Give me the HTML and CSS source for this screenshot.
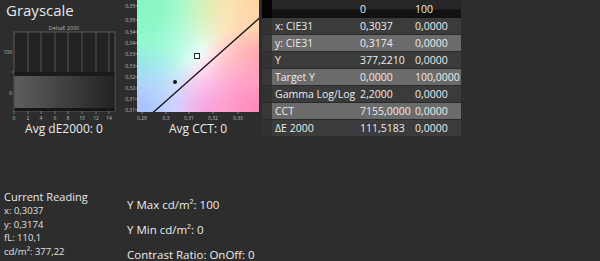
FILE: index.html
```html
<!DOCTYPE html>
<html>
<head>
<meta charset="utf-8">
<link rel="stylesheet" href="styles.css">
</head>
<body>
<div class="page">
  <div class="top">
    <div class="panel panel-gray">
      <div class="title">Grayscale</div>
      <svg class="chart-gray" width="120" height="102" viewBox="0 0 120 102">
        <defs>
          <linearGradient id="band" x1="0" y1="0" x2="1" y2="0">
            <stop offset="0" stop-color="#5e5e5e"/>
            <stop offset="1" stop-color="#232323"/>
          </linearGradient>
        </defs>
        <text x="64" y="10" class="t-tiny" text-anchor="middle">DeltaE 2000</text>
        <rect x="14" y="12" width="101" height="79" fill="#222222" stroke="#5a5a5a" stroke-width="1"/>
        <g stroke="#555555" stroke-width="1">
          <line x1="28" y1="12" x2="28" y2="91"/>
          <line x1="41" y1="12" x2="41" y2="91"/>
          <line x1="55" y1="12" x2="55" y2="91"/>
          <line x1="68" y1="12" x2="68" y2="91"/>
          <line x1="82" y1="12" x2="82" y2="91"/>
          <line x1="96" y1="12" x2="96" y2="91"/>
          <line x1="109" y1="12" x2="109" y2="91"/>
        </g>
        <rect x="14.5" y="52" width="100" height="4" fill="#1a1a1a"/>
        <rect x="14.5" y="56" width="100" height="32" fill="url(#band)"/>
        <rect x="14.5" y="88" width="100" height="3" fill="#161616"/>
        <g stroke="#777" stroke-width="1">
          <line x1="12" y1="52" x2="14" y2="52"/>
          <line x1="14" y1="91" x2="14" y2="94"/>
          <line x1="28" y1="91" x2="28" y2="94"/>
          <line x1="41" y1="91" x2="41" y2="94"/>
          <line x1="55" y1="91" x2="55" y2="94"/>
          <line x1="68" y1="91" x2="68" y2="94"/>
          <line x1="82" y1="91" x2="82" y2="94"/>
          <line x1="96" y1="91" x2="96" y2="94"/>
          <line x1="109" y1="91" x2="109" y2="94"/>
        </g>
        <text x="12" y="34" class="t-axis" text-anchor="end">100</text>
        <text x="12" y="75" class="t-axis" text-anchor="end">0</text>
        <g class="t-axis" text-anchor="middle">
          <text x="14" y="100">0</text>
          <text x="28" y="100">2</text>
          <text x="41" y="100">4</text>
          <text x="55" y="100">6</text>
          <text x="68" y="100">8</text>
          <text x="82" y="100">10</text>
          <text x="96" y="100">12</text>
          <text x="109" y="100">14</text>
        </g>
      </svg>
      <div class="caption caption-gray">Avg dE2000: 0</div>
    </div>

    <div class="panel panel-cie">
      <svg class="chart-cie" width="142" height="122" viewBox="0 0 142 122">
        <defs>
          <clipPath id="plotclip"><rect x="17" y="0" width="122" height="112"/></clipPath>
          <radialGradient id="gTL" gradientUnits="userSpaceOnUse" cx="17" cy="0" r="95">
            <stop offset="0" stop-color="#84f6c2" stop-opacity="1"/>
            <stop offset="0.3" stop-color="#84f6c2" stop-opacity="0.9"/>
            <stop offset="1" stop-color="#84f6c2" stop-opacity="0"/>
          </radialGradient>
          <radialGradient id="gTR" gradientUnits="userSpaceOnUse" cx="139" cy="0" r="75">
            <stop offset="0" stop-color="#ffd29a" stop-opacity="1"/>
            <stop offset="1" stop-color="#ffd29a" stop-opacity="0"/>
          </radialGradient>
          <radialGradient id="gTM" gradientUnits="userSpaceOnUse" cx="88" cy="0" r="50">
            <stop offset="0" stop-color="#f2fdb8" stop-opacity="1"/>
            <stop offset="1" stop-color="#f2fdb8" stop-opacity="0"/>
          </radialGradient>
          <radialGradient id="gBR" gradientUnits="userSpaceOnUse" cx="139" cy="112" r="85">
            <stop offset="0" stop-color="#ff88b9" stop-opacity="1"/>
            <stop offset="0.25" stop-color="#ff88b9" stop-opacity="0.85"/>
            <stop offset="1" stop-color="#ff88b9" stop-opacity="0"/>
          </radialGradient>
          <radialGradient id="gRM" gradientUnits="userSpaceOnUse" cx="139" cy="52" r="55">
            <stop offset="0" stop-color="#ffaea4" stop-opacity="0.9"/>
            <stop offset="1" stop-color="#ffaea4" stop-opacity="0"/>
          </radialGradient>
          <radialGradient id="gBL" gradientUnits="userSpaceOnUse" cx="17" cy="112" r="70">
            <stop offset="0" stop-color="#a8c0ff" stop-opacity="1"/>
            <stop offset="0.2" stop-color="#a8c0ff" stop-opacity="0.9"/>
            <stop offset="1" stop-color="#a8c0ff" stop-opacity="0"/>
          </radialGradient>
          <radialGradient id="gLM" gradientUnits="userSpaceOnUse" cx="17" cy="60" r="65">
            <stop offset="0" stop-color="#98fcee" stop-opacity="1"/>
            <stop offset="1" stop-color="#98fcee" stop-opacity="0"/>
          </radialGradient>
          <radialGradient id="gBM" gradientUnits="userSpaceOnUse" cx="88" cy="112" r="55">
            <stop offset="0" stop-color="#f2b8ff" stop-opacity="1"/>
            <stop offset="1" stop-color="#f2b8ff" stop-opacity="0"/>
          </radialGradient>
        </defs>
        <g clip-path="url(#plotclip)">
          <rect x="17" y="0" width="122" height="112" fill="#ffffff"/>
          <rect x="17" y="0" width="122" height="112" fill="url(#gLM)"/>
          <rect x="17" y="0" width="122" height="112" fill="url(#gBM)"/>
          <rect x="17" y="0" width="122" height="112" fill="url(#gRM)"/>
          <rect x="17" y="0" width="122" height="112" fill="url(#gTM)"/>
          <rect x="17" y="0" width="122" height="112" fill="url(#gTL)"/>
          <rect x="17" y="0" width="122" height="112" fill="url(#gTR)"/>
          <rect x="17" y="0" width="122" height="112" fill="url(#gBL)"/>
          <rect x="17" y="0" width="122" height="112" fill="url(#gBR)"/>
          <line x1="32.5" y1="113" x2="140" y2="17.5" stroke="#111" stroke-width="1.3"/>
          <rect x="74.5" y="53.5" width="5" height="5" fill="#ffffff" stroke="#222" stroke-width="1"/>
          <circle cx="55" cy="82" r="2" fill="#111"/>
        </g>
        <g stroke="#888" stroke-width="1">
          <line x1="15" y1="6" x2="17" y2="6"/>
          <line x1="15" y1="20" x2="17" y2="20"/>
          <line x1="15" y1="32" x2="17" y2="32"/>
          <line x1="15" y1="43" x2="17" y2="43"/>
          <line x1="15" y1="54" x2="17" y2="54"/>
          <line x1="15" y1="66" x2="17" y2="66"/>
          <line x1="15" y1="77" x2="17" y2="77"/>
          <line x1="15" y1="88" x2="17" y2="88"/>
          <line x1="15" y1="99" x2="17" y2="99"/>
          <line x1="15" y1="110" x2="17" y2="110"/>
          <line x1="22" y1="112" x2="22" y2="114"/>
          <line x1="46" y1="112" x2="46" y2="114"/>
          <line x1="69" y1="112" x2="69" y2="114"/>
          <line x1="93" y1="112" x2="93" y2="114"/>
          <line x1="118" y1="112" x2="118" y2="114"/>
        </g>
        <g class="t-axis" text-anchor="end">
          <text x="15" y="8">0,35</text>
          <text x="15" y="22">0,35</text>
          <text x="15" y="34">0,34</text>
          <text x="15" y="45">0,34</text>
          <text x="15" y="56">0,33</text>
          <text x="15" y="68">0,33</text>
          <text x="15" y="79">0,32</text>
          <text x="15" y="90">0,32</text>
          <text x="15" y="101">0,31</text>
          <text x="15" y="112">0,31</text>
        </g>
        <g class="t-axis" text-anchor="middle">
          <text x="22" y="120">0,29</text>
          <text x="46" y="120">0,3</text>
          <text x="69" y="120">0,31</text>
          <text x="93" y="120">0,32</text>
          <text x="118" y="120">0,33</text>
        </g>
      </svg>
      <div class="caption caption-cie">Avg CCT: 0</div>
    </div>

    <table class="data">
      <colgroup>
        <col class="c-rh"><col class="c-label"><col class="c-v1"><col class="c-v2">
      </colgroup>
      <thead>
        <tr><th class="rh"></th><th></th><th>0</th><th>100</th></tr>
      </thead>
      <tbody>
        <tr><td class="rh"></td><td>x: CIE31</td><td>0,3037</td><td>0,0000</td></tr>
        <tr class="alt"><td class="rh"></td><td>y: CIE31</td><td>0,3174</td><td>0,0000</td></tr>
        <tr><td class="rh"></td><td>Y</td><td>377,2210</td><td>0,0000</td></tr>
        <tr class="alt"><td class="rh"></td><td>Target Y</td><td>0,0000</td><td>100,0000</td></tr>
        <tr><td class="rh"></td><td>Gamma Log/Log</td><td>2,2000</td><td>0,0000</td></tr>
        <tr class="alt"><td class="rh"></td><td>CCT</td><td>7155,0000</td><td>0,0000</td></tr>
        <tr><td class="rh"></td><td>ΔE 2000</td><td>111,5183</td><td>0,0000</td></tr>
      </tbody>
    </table>
  </div>

  <div class="bottom">
    <div class="reading">
      <div class="reading-title">Current Reading</div>
      <div class="reading-line">x: 0,3037</div>
      <div class="reading-line">y: 0,3174</div>
      <div class="reading-line">fL: 110,1</div>
      <div class="reading-line">cd/m²: 377,22</div>
    </div>
    <div class="stats">
      <div class="stat">Y Max cd/m²: 100</div>
      <div class="stat">Y Min cd/m²: 0</div>
      <div class="stat">Contrast Ratio: OnOff: 0</div>
    </div>
  </div>
</div>
</body>
</html>
```

FILE: styles.css
```css
html, body {
  margin: 0;
  padding: 0;
  background: #2d2d2d;
}
body {
  font-family: "Open Sans", "Noto Sans", "Liberation Sans", sans-serif;
  color: #e6e6e6;
  width: 600px;
  height: 261px;
  overflow: hidden;
}
.page {
  display: flex;
  flex-direction: column;
}
.top {
  display: flex;
  align-items: flex-start;
  height: 190px;
}
.panel {
  display: flex;
  flex-direction: column;
}
.panel-gray {
  width: 120px;
}
.title {
  height: 20px;
  line-height: 20px;
  font-size: 15px;
  padding-left: 6px;
  color: #e8e8e8;
}
.chart-gray, .chart-cie {
  display: block;
}
.panel-cie {
  width: 142px;
}
.caption {
  font-size: 12px;
  line-height: 14px;
  height: 14px;
  text-align: center;
  color: #ececec;
  white-space: nowrap;
}
.caption-gray {
  padding-left: 8px;
}
.caption-cie {
  padding-left: 14px;
}
.t-axis {
  font-family: "Open Sans", "Noto Sans", sans-serif;
  font-size: 5px;
  fill: #bdbdbd;
}
.t-tiny {
  font-family: "Open Sans", "Noto Sans", sans-serif;
  font-size: 5.5px;
  fill: #b0b0b0;
}
.data {
  border-collapse: collapse;
  table-layout: fixed;
  width: 199px;
  font-size: 10.5px;
  color: #ececec;
}
.c-rh { width: 10px; }
.c-label { width: 85px; }
.c-v1 { width: 55px; }
.c-v2 { width: 49px; }
.data th, .data td {
  padding: 0 0 0 3px;
  text-align: left;
  font-weight: normal;
  white-space: nowrap;
  overflow: visible;
  height: 16px;
  line-height: 16px;
  border-bottom: 1px solid #2a2a2a;
}
.data thead th {
  height: 18px;
  background: linear-gradient(#262626 0, #262626 50%, #111111 55%, #111111 100%);
  border-bottom: 0;
}
.data th.rh, .data td.rh {
  padding: 0;
}
.data thead th.rh {
  background: #050505;
}
.data tbody tr td {
  background: #3b3b3b;
}
.data tbody td.rh {
  background: #323232;
}
.data tbody tr.alt td {
  background: #6b6b6b;
}
.data tbody tr.alt td.rh {
  background: #383838;
}
.bottom {
  display: flex;
  align-items: flex-start;
}
.reading {
  width: 123px;
  padding-left: 4px;
  box-sizing: border-box;
}
.reading-title {
  font-size: 11px;
  line-height: 14px;
  color: #e8e8e8;
}
.reading-line {
  font-size: 9.5px;
  line-height: 13.7px;
  color: #e0e0e0;
}
.stats {
  display: flex;
  flex-direction: column;
  gap: 12px;
  padding-top: 7.5px;
  padding-left: 4px;
}
.stat {
  font-size: 11.5px;
  line-height: 13px;
  color: #ececec;
  white-space: nowrap;
}
```
